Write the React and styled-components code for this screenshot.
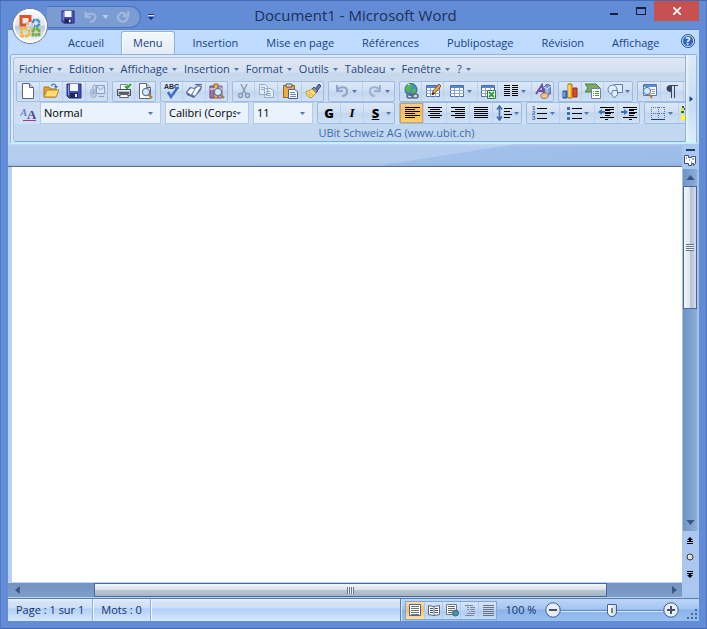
import React, { useState } from "react";
import styled, { createGlobalStyle, css } from "styled-components";

const GlobalStyle = createGlobalStyle`
  * {
    box-sizing: border-box;
  }
  body {
    margin: 0;
    font-family: "Open Sans", "Noto Sans", sans-serif;
    font-size: 11px;
    line-height: 16px;
  }
  button, select, input, textarea {
    font: inherit;
    color: inherit;
    margin: 0;
    padding: 0;
    border: 0;
    background: none;
  }
  button:focus-visible, select:focus-visible {
    outline: 1px dotted #15428b;
  }
`;

const Window = styled.div`
  position: relative;
  display: flex;
  flex-direction: column;
  min-height: 100vh;
  padding: 0 8px 8px;
  background: #638cd6;
  border-top: 1px solid #456cb3;
  box-shadow: inset 1px 0 #4f77c2, inset -1px 0 #4f77c2, inset 0 -1px #4068b0;
`;

const TitleBar = styled.header`
  display: grid;
  grid-template-columns: 152px 1fr 100px;
  height: 29px;
  border-bottom: 1px solid #5f83c0;
`;

const Title = styled.h1`
  margin: 0;
  padding-right: 48px;
  font-size: 15px;
  font-weight: 400;
  line-height: 28px;
  color: #1c2f57;
  text-align: center;
  white-space: nowrap;
`;

const OfficeButton = styled.button`
  position: absolute;
  left: 12px;
  top: 7px;
  z-index: 2;
  width: 36px;
  height: 36px;
  svg {
    display: block;
  }
`;

const QuickAccess = styled.div`
  display: flex;
  align-items: center;
  align-self: start;
  height: 22px;
  margin-top: 5px;
`;

const QuickPill = styled.div`
  display: flex;
  align-items: center;
  gap: 4px;
  width: 94px;
  height: 22px;
  margin-left: 39px;
  padding-left: 13px;
  border: 1px solid #4a73bd;
  border-left: 0;
  border-radius: 0 11px 11px 0;
  background: #7b9bd3;
`;

const QuickButton = styled.button`
  display: grid;
  place-items: center;
  width: ${(props) => props.$w}px;
  height: 18px;
  margin-left: ${(props) => props.$gap || 0}px;
`;

const WindowButtons = styled.div`
  display: flex;
  justify-content: flex-end;
`;

const WindowButton = styled.button`
  display: grid;
  place-items: center;
  flex: none;
  width: ${(props) => (props.$close ? 45 : 27)}px;
  height: 20px;
  background: ${(props) => (props.$close ? "#c75050" : "none")};
`;

const TabRow = styled.nav`
  display: flex;
  align-items: flex-end;
  height: 24px;
  padding: 0 4px 0 46px;
  background: #bfdbff;
  color: #15428b;
`;

const Tab = styled.button`
  height: 22px;
  padding: 0 14px;
  white-space: nowrap;
  ${(props) =>
    props.$active &&
    css`
      position: relative;
      z-index: 1;
      height: 23px;
      margin: 0 4px 0 3px;
      padding: 0 11px;
      border: 1px solid #8db2e3;
      border-bottom: 0;
      border-radius: 3px 3px 0 0;
      background: linear-gradient(#f4f8fd, #e2ebf7);
      box-shadow: inset 1px 1px #fff;
    `}
`;

const HelpButton = styled.button`
  width: 16px;
  height: 16px;
  margin: 0 -1px 5px auto;
  svg {
    display: block;
  }
`;

const RibbonShell = styled.section`
  padding: 0 2px;
  background: #bfdbff;
`;

const Ribbon = styled.div`
  display: flex;
  height: 90px;
  border: 1px solid #8db2e3;
  border-bottom: 2px solid #c9effb;
  border-radius: 3px;
  background: #dfe9f5;
`;

const RibbonGroup = styled.div`
  display: flex;
  flex: 1;
  flex-direction: column;
  min-width: 0;
  margin: 2px 0 0 2px;
  border: 1px solid #a9c3e0;
  border-bottom-color: #7ea9d8;
  border-right: 0;
  border-radius: 3px 0 0 3px;
  background: linear-gradient(#dfe8f4 0, #d4e0f0 14px, #c7d8ed 15px, #d3e3f5 100%);
  overflow: hidden;
`;

const MenuBar = styled.div`
  display: flex;
  gap: 7px;
  height: 23px;
  padding: 0 5px;
  color: #1f4583;
`;

const MenuButton = styled.button`
  display: flex;
  align-items: center;
  gap: 4px;
  white-space: nowrap;
`;

const ToolRow = styled.div`
  display: flex;
  gap: 4px;
  height: 22px;
  padding-left: 2px;
`;

const ToolGroup = styled.div`
  display: flex;
  flex: none;
  border: 1px solid #9ebce2;
  border-radius: 2px;
  background: linear-gradient(#dce8f7 0, #cfdff3 9px, #c2d6ef 10px, #d0e1f6 100%);
`;

const ToolButton = styled.button`
  display: flex;
  align-items: center;
  justify-content: center;
  gap: 2px;
  flex: none;
  width: ${(props) => props.$w}px;
  color: ${(props) => (props.$letter ? "#000" : "inherit")};
  & + & {
    border-left: 1px solid #bcd1ec;
  }
  ${(props) =>
    props.$active &&
    css`
      background: linear-gradient(#f8cf97, #fcb95c 45%, #fbd66f);
      box-shadow: inset 0 0 0 1px #c9a268;
    `}
`;

const StyleButton = styled.button`
  display: grid;
  place-items: center;
  flex: none;
  width: 24px;
  margin-right: -4px;
`;

const Combo = styled.label`
  display: grid;
  grid-template-columns: 1fr 12px;
  align-items: center;
  flex: none;
  width: ${(props) => props.$w}px;
  border: 1px solid #b3cbe9;
  background: #eaf2fb;
  select {
    grid-area: 1 / 1 / 2 / 2;
    width: 100%;
    min-width: 0;
    height: 18px;
    padding-left: 3px;
    appearance: none;
    color: #000;
    overflow: hidden;
  }
  svg {
    grid-area: 1 / 2 / 2 / 3;
  }
`;

const GroupLabel = styled.div`
  flex: 1;
  background: #c1d8f0;
  color: #3e6aaa;
  text-align: center;
  line-height: 17px;
  padding-left: 94px;
`;

const RibbonMore = styled.button`
  width: 11px;
  border-left: 1px solid #8fb3de;
  background: linear-gradient(90deg, #fff8, #fff0 4px), linear-gradient(#dce8f5, #c8dcf2 60%, #d9f0fb);
  color: #15428b;
  svg {
    display: block;
    margin: 0 auto 0 3px;
  }
`;

const Workspace = styled.main`
  display: grid;
  grid-template-columns: 1fr 17px;
  flex: 1;
  min-height: 0;
  background: #b7d0f1;
`;

const PageArea = styled.div`
  display: grid;
  grid-template-rows: 23px 1fr 16px;
  min-width: 0;
`;

const Band = styled.div`
  border-bottom: 1px solid #5e6d86;
  background: linear-gradient(#fff3, #fff0 3px, #0000 18px, #2b55911a), linear-gradient(171deg, #b4cdef 0, #b4cdef 62%, #a1c0ea 63%, #9bbce8 100%);
`;

const Page = styled.textarea`
  display: block;
  width: calc(100% - 4px);
  height: 100%;
  margin-left: 4px;
  padding: 24px 60px;
  background: #fff;
  color: #000;
  resize: none;
  outline: 0;
`;

const ScrollTrack = styled.div`
  display: flex;
  flex-direction: ${(props) => (props.$vertical ? "column" : "row")};
  min-width: 0;
  background: ${(props) =>
    props.$vertical
      ? "linear-gradient(90deg, #6f93c4, #8cadd8)"
      : "linear-gradient(#7394c2, #7d9ec9)"};
  ${(props) =>
    props.$vertical
      ? css`
          flex: 1;
          border-left: 1px solid #a7c2e8;
          border-right: 2px solid #a7c2e8;
        `
      : css`
          border-top: 1px solid #bdd5f7;
          border-bottom: 1px solid #bdd5f7;
        `}
`;

const ScrollArrow = styled.button`
  display: grid;
  place-items: center;
  flex: none;
  width: ${(props) => (props.$vertical ? 14 : 17)}px;
  height: ${(props) => (props.$vertical ? 17 : 14)}px;
  margin-top: ${(props) => (props.$end ? "auto" : 0)};
`;

const Thumb = styled.div`
  display: grid;
  place-items: center;
  border: 1px solid #4a6797;
  ${(props) =>
    props.$vertical
      ? css`
          flex: 0 0 123px;
          background: linear-gradient(90deg, #f4f6f9, #dfe5ec 50%, #b2c0d2 52%, #d3ddea);
        `
      : css`
          flex: 1;
          margin: 0 58px 0 69px;
          background: linear-gradient(#f2f5f8, #dce3ea 45%, #b7c4d3 55%, #a5b4c6);
        `}
`;

const Grip = styled.span`
  width: ${(props) => (props.$vertical ? 8 : 7)}px;
  height: 7px;
  background: repeating-linear-gradient(
    ${(props) => (props.$vertical ? "180deg" : "90deg")},
    #66758c 0 1px,
    #eef2f7 1px 2px
  );
`;

const Side = styled.div`
  display: flex;
  flex-direction: column;
`;

const RulerBox = styled.div`
  display: grid;
  grid-template-rows: 10px 1fr;
  justify-items: center;
  height: 25px;
  padding-right: 1px;
  background: #abc7ef;
`;

const SplitHandle = styled.span`
  width: 9px;
  height: 2px;
  margin-top: 5px;
  background: #1e3c6e;
`;

const BrowseButtons = styled.div`
  display: grid;
  grid-template-rows: repeat(3, 17px);
  place-items: center;
  height: 67px;
  padding-right: 2px;
  background: #abc7f0;
`;

const StatusBar = styled.footer`
  display: flex;
  height: 23px;
  border-top: 1px solid #567db0;
  background: linear-gradient(#f0f6ff 0, #d7e6f9 2px, #cadef7 9px, #b3d0f7 10px, #d5e7fc 100%);
  color: #15326b;
`;

const StatusItem = styled.button`
  padding: 0 8px 1px;
  border-right: 1px solid #8fb0dc;
  box-shadow: 1px 0 #f3f9ff;
  white-space: nowrap;
`;

const StatusRight = styled.div`
  display: flex;
  align-items: center;
  width: 299px;
  margin-left: auto;
  border-left: 1px solid #4f7fbd;
  box-shadow: inset 1px 0 #d7e8fc;
  background: linear-gradient(#bcd6f8, #a4c5f2 45%, #8bb3ea 50%, #9ac0f1);
`;

const Views = styled.div`
  display: flex;
  height: 19px;
  margin-left: 4px;
  border: 1px solid #83a6d5;
  background: linear-gradient(#d6e6fa, #bdd5f5 50%, #aecbf1 52%, #c8defa);
`;

const ViewButton = styled.button`
  display: grid;
  place-items: center;
  width: 18px;
  background: ${(props) =>
    props.$active ? "linear-gradient(#fbdba6, #f6c064 50%, #ffe29a)" : "none"};
  & + & {
    border-left: 1px solid #b1caec;
  }
`;

const ZoomLabel = styled.button`
  width: 48px;
  padding-bottom: 1px;
  white-space: nowrap;
`;

const ZoomButton = styled.button`
  display: grid;
  place-items: center;
  width: 16px;
  height: 16px;
`;

const ZoomRange = styled.input`
  appearance: none;
  width: 102px;
  height: 16px;
  background: linear-gradient(#5e8cc8, #5e8cc8) center / 100% 1px no-repeat,
    linear-gradient(#dcebff, #dcebff) center 9px / 100% 1px no-repeat;
  &::-webkit-slider-thumb {
    appearance: none;
    width: 10px;
    height: 13px;
    border: 1px solid #45618f;
    border-radius: 1px 1px 5px 5px;
    background: linear-gradient(#7385a0, #7385a0) center 3px / 2px 5px no-repeat,
      linear-gradient(90deg, #fff, #ccd8e8);
  }
`;

const ResizeGrip = styled.span`
  align-self: flex-end;
  margin: 0 1px 1px auto;
  svg {
    display: block;
  }
`;

function Caret({ color = "#5377ad", dir = "down", size = 5 }) {
  const points = {
    down: "0,0 10,0 5,6",
    up: "0,6 10,6 5,0",
    left: "7,0 7,10 1,5",
    right: "1,0 1,10 7,5",
  };
  const flat = dir === "down" || dir === "up";
  return (
    <svg
      width={flat ? size : Math.round(size * 0.7)}
      height={flat ? Math.round(size * 0.6) : size}
      viewBox={flat ? "0 0 10 6" : "0 0 7 10"}
      aria-hidden="true"
    >
      <polygon points={points[dir]} fill={color} />
    </svg>
  );
}

const lines = (rows, color = "#000") =>
  rows.map(([x, y, w]) => (
    <rect key={`${x}-${y}`} x={x} y={y} width={w} height="1" fill={color} />
  ));

const floppy = (
  <>
    <path d="M1 1h14v14H3l-2-2z" fill="#4550ae" stroke="#272f83" />
    <path d="M4 1h8v7H4z" fill="#f3f6ff" />
    <path d="M2 2h1v10H2z" fill="#8c97e4" />
    <path d="M4 10h8v5H4z" fill="#20265f" />
    <path d="M9 11h2v3H9z" fill="#e7edff" />
  </>
);

const doc = (
  <>
    <path d="M2.5.5h7l4 4v11h-11z" fill="#fff" stroke="#59657c" />
    <path d="M9.5.5v4h4" fill="#cbd7e9" stroke="#59657c" />
  </>
);

const lens = (
  <>
    <path d="M11 11l4 4" stroke="#bd7d2a" strokeWidth="2.4" />
    <circle cx="9" cy="9" r="3.6" fill="#d3ebfb" stroke="#60799d" strokeWidth="1.3" />
  </>
);

const table = (
  <>
    <path d="M1.5 2.5h13v11h-13z" fill="#fff" stroke="#4b6cae" />
    <path d="M2 3h12v2H2z" fill="#5a86d1" />
    <path d="M1 7.5h14M1 10.5h14M5.5 5v9M10.5 5v9" stroke="#8ca9d7" />
  </>
);

const icons = {
  save: floppy,
  new: doc,
  open: (
    <>
      <path d="M1 14V4h5l1 2h6v8z" fill="#e3a431" stroke="#a87418" />
      <path d="M1 14l3-7h12l-3 7z" fill="#ffdc72" stroke="#b88625" />
      <path d="M8 3c2-3 5-2 5 1" fill="none" stroke="#4878b4" strokeWidth="1.2" />
      <path d="M11 3h4l-2 3z" fill="#4878b4" />
    </>
  ),
  mail: (
    <g fill="#d9e4f4" stroke="#8d9fbd">
      <path d="M7.5 2.5h8v8h-8zM7.5 3l4 4 4-4" />
      <path d="M2 6v5.5c0 4 5 4 5 0V4c0-3-3-3-3 0v7c0 1 1 1 1 0V6" fill="none" />
      <path d="M10 13.5h5" />
    </g>
  ),
  print: (
    <>
      <path d="M4.5 1.5h7v6h-7z" fill="#fff" stroke="#7b8696" />
      <path d="M1.5 6.5h13v6h-13z" fill="#b8bcc4" stroke="#454b55" />
      <path d="M2 7h12v1H2z" fill="#eef" />
      <path d="M3 9h10v2H3z" fill="#555c67" />
      <path d="M4.5 11.5h7l1 3h-9z" fill="#fff" stroke="#59616f" />
      <path d="M9 3l2 2 4-4" fill="none" stroke="#36a535" strokeWidth="2" />
    </>
  ),
  preview: (
    <>
      {doc}
      {lens}
    </>
  ),
  spell: (
    <>
      <text x="0" y="6" fontSize="7" fontWeight="700" fontFamily="Liberation Sans, sans-serif" fill="#1c2740">
        ABC
      </text>
      <path d="M4 9l3 5 7-10" fill="none" stroke="#3c70c9" strokeWidth="2.5" />
    </>
  ),
  book: (
    <>
      <path d="M0 9l4-5 4 1 4-3 4 1-1 4-7 8-7-3z" fill="#52669b" />
      <path d="M1 9l4-4 4 1-4 6zM9 6l3-3 3 1-6 9-3-1z" fill="#fff" stroke="#7086b5" strokeWidth=".6" />
      <path d="M9 1.5h7" stroke="#4466aa" />
    </>
  ),
  research: (
    <>
      <path d="M1 3h4v12H1z" fill="#a274bc" stroke="#67437e" />
      <path d="M5 1h4v14H5z" fill="#eab84a" stroke="#986c1c" />
      <path d="M9 3h4v12H9z" fill="#c9a0d2" stroke="#7d5a92" />
      <path d="M1 6h12" stroke="#fff" />
      {lens}
    </>
  ),
  cut: (
    <g fill="none" stroke="#8798b3" strokeWidth="1.4">
      <path d="M5 1l5 10M11 1L6 11" />
      <circle cx="4.5" cy="12.5" r="2" />
      <circle cx="11.5" cy="12.5" r="2" />
    </g>
  ),
  copy: (
    <g fill="#e4ecf8" stroke="#98abc9">
      <path d="M1.5 1.5h6l2 2v8h-8zM6.5 5.5h6l3 2v7h-9z" />
      <path d="M3 4.5h4M3 6.5h3M8 8.5h4M8 10.5h5M8 12.5h5" />
    </g>
  ),
  paste: (
    <>
      <path d="M1.5 2.5h11v12h-11z" fill="#eeb03a" stroke="#93661c" />
      <path d="M4 1h6v3H4z" fill="#d9dce3" stroke="#555c6b" />
      <path d="M6.5 6.5h6l3 2v7h-9z" fill="#fff" stroke="#3e5fa4" />
      <path d="M8 9.5h5M8 11.5h6M8 13.5h6" stroke="#6686c4" />
    </>
  ),
  brush: (
    <>
      <path d="M10 6l4-5 2 2-4 5z" fill="#607bc4" stroke="#34446f" />
      <path d="M9 4l4 4-2 2-4-4z" fill="#8c8ea3" stroke="#4a4d60" />
      <path d="M7 6l4 4-5 5c-3-1-5-3-5-6z" fill="#f8df7b" stroke="#b8943a" />
      <path d="M4 9l4 3M3 11l3 2" stroke="#d5ac3c" />
    </>
  ),
  undo: (
    <path d="M3 2v6h6M3 8c2-5 10-5 10 0 0 3-2 5-5 5" fill="none" stroke="#8fa5c7" strokeWidth="2" />
  ),
  redo: (
    <path d="M13 2v6H7M13 8C11 3 3 3 3 8c0 3 2 5 5 5" fill="none" stroke="#9bb0d0" strokeWidth="2" />
  ),
  quickUndo: (
    <path d="M3 2v6h6M3 8c2-5 11-5 11 0 0 3-2 5-6 6" fill="none" stroke="#9fb6dd" strokeWidth="2.6" />
  ),
  repeat: (
    <path d="M14 1v6H8M12 6C7 0 0 6 3 11c3 4 9 3 10-2" fill="none" stroke="#a3b9de" strokeWidth="2.4" />
  ),
  globe: (
    <>
      <circle cx="8" cy="6.5" r="6" fill="#4690c4" stroke="#286086" />
      <path d="M4 2l4-1 2 2-3 2 1 3-3 1-3-3zM10 5l3 1-1 4-3 1z" fill="#5bb64a" />
      <path d="M5 2l2-1" stroke="#e5f9ff" />
      <g fill="none" stroke="#596a82" strokeWidth="1.5">
        <rect x="4" y="11" width="6" height="4" rx="2" />
        <rect x="9" y="11" width="6" height="4" rx="2" />
      </g>
    </>
  ),
  drawTable: (
    <>
      {table}
      <path d="M7 12l1-4 6-7 2 2-6 7z" fill="#e9ae48" stroke="#80551d" />
      <path d="M7 12l1-3 2 2z" fill="#322" />
    </>
  ),
  table,
  excel: (
    <>
      {table}
      <path d="M7.5 7.5h8v8h-8z" fill="#fff" stroke="#377e42" />
      <path d="M9 9l5 5M14 9l-5 5" stroke="#2f9845" strokeWidth="1.8" />
    </>
  ),
  columns: (
    <>{lines([2, 4, 6, 8, 10, 12].flatMap((y) => [[1, y, 6], [9, y, 6]]))}</>
  ),
  draw: (
    <>
      <path d="M9 4l3-3 4 2v7l-4 3-3-2z" fill="#8496d4" stroke="#4a5996" />
      <path d="M9 4l3 2 4-3M12 6v7" fill="none" stroke="#dbe3f8" />
      <path d="M1 11L7 2l2 9M4 8h5" fill="none" stroke="#6f4fa1" strokeWidth="2" />
      <path d="M6 12c0-2 6-3 7-1v3c-1 2-7 2-7 0z" fill="#efc08c" stroke="#a2764e" />
    </>
  ),
  chart: (
    <>
      <path d="M1 8h4v7H1z" fill="#497dd0" stroke="#224c92" />
      <path d="M6 1h4v14H6z" fill="#ffbe27" stroke="#aa7110" />
      <path d="M11 5h4v9h-4z" fill="#df4a28" stroke="#942d18" />
      <path d="M2 9v5" stroke="#9dc1f5" />
      <path d="M7 2v12" stroke="#fff09b" />
    </>
  ),
  diagram: (
    <>
      <path d="M0 1h11l4 4-4 4H0l3-4z" fill="#78aa66" stroke="#4b8148" />
      <path d="M6.5 5.5h9v10h-9z" fill="#fff" stroke="#71849b" />
      <path d="M8 8.5h1M10 8.5h4M8 10.5h1M10 10.5h4M8 12.5h1M10 12.5h4" stroke="#569b50" />
    </>
  ),
  shapes: (
    <g fill="#e3edfb" stroke="#547eb9">
      <path d="M7.5 1.5h8v8h-8z" />
      <circle cx="5.5" cy="6.5" r="4.5" />
      <path d="M5.5 7.5h5v4l-3 3.5-3-3.5z" />
    </g>
  ),
  zoomView: (
    <>
      <path d="M2.5 1.5h13v11h-13z" fill="#fff" stroke="#5876aa" />
      <path d="M3 2h12v2H3z" fill="#5b8ed6" />
      <path d="M10 6.5h4M11 8.5h3M10 10.5h4" stroke="#7e9cc8" />
      <path d="M8 11l3 4" stroke="#bb7b2e" strokeWidth="2" />
      <circle cx="6" cy="8" r="3.6" fill="#cce7fa" stroke="#557799" />
    </>
  ),
  pilcrow: (
    <path d="M14 2H7C1 2 1 9 7 9v6h1V3h2v12h1V3h3z" fill="#39455d" />
  ),
  left: lines([[1, 2, 15], [1, 4, 10], [1, 6, 15], [1, 8, 10], [1, 10, 15], [1, 12, 10]]),
  center: lines([[1, 2, 14], [3, 4, 10], [1, 6, 14], [3, 8, 10], [1, 10, 14], [3, 12, 10]]),
  right: lines([[1, 2, 14], [5, 4, 10], [1, 6, 14], [5, 8, 10], [1, 10, 14], [5, 12, 10]]),
  justify: lines([2, 4, 6, 8, 10, 12].map((y) => [1, y, 14])),
  spacing: (
    <>
      <path d="M3.5 2v12M1 4.5L3.5 1 6 4.5M1 11.5L3.5 15 6 11.5" fill="none" stroke="#416eac" strokeWidth="1.6" />
      {lines([[8, 3, 8], [8, 6, 6], [8, 9, 8], [8, 12, 6]])}
    </>
  ),
  numbers: (
    <>
      {[1, 2, 3].map((n) => (
        <text key={n} x="0" y={n * 5} fontSize="6" fontWeight="700" fontFamily="Liberation Sans, sans-serif" fill="#3d66a5">
          {n}
        </text>
      ))}
      {lines([[5, 3, 10], [5, 8, 10], [5, 13, 10]])}
    </>
  ),
  bullets: (
    <>
      <path d="M1 2h3v3H1zM1 7h3v3H1zM1 12h3v3H1z" fill="#416eac" />
      {lines([[6, 3, 10], [6, 8, 10], [6, 13, 10]])}
    </>
  ),
  outdent: (
    <>
      {lines([[2, 2, 14], [7, 4, 9], [7, 5, 5], [7, 7, 9], [7, 8, 6], [7, 10, 5], [2, 12, 14], [7, 14, 3]])}
      <path d="M0 7l4-3v2h3v2H4v2z" fill="#3b70b5" />
    </>
  ),
  indent: (
    <>
      {lines([[2, 2, 14], [8, 4, 8], [8, 5, 5], [8, 7, 8], [8, 8, 6], [8, 10, 5], [2, 12, 14], [8, 14, 3]])}
      <path d="M7 7L3 4v2H0v2h3v2z" fill="#3b70b5" />
    </>
  ),
  borders: (
    <>
      <path d="M1.5 2v11M8.5 2v11M14.5 2v11M1 2.5h14M1 8.5h14" stroke="#59729b" strokeDasharray="1 1" />
      <path d="M1 14.5h14" stroke="#263d67" />
    </>
  ),
  highlight: (
    <>
      <path d="M1 1h2v2H1zM3 3h2v2H3zM0 6h3v2H0z" fill="#4d611e" />
      <path d="M0 10h15v5H0z" fill="#ff0" />
      <path d="M0 3h3v3H0z" fill="#dce642" />
    </>
  ),
  styles: (
    <>
      <text x="0" y="11" fontSize="11" fontWeight="700" fontStyle="italic" fontFamily="Liberation Serif, serif" fill="#6685c8">
        A
      </text>
      <text x="7" y="14" fontSize="13" fontWeight="700" fontFamily="Liberation Serif, serif" fill="#51458e">
        A
      </text>
      <path d="M3 15.5h13" stroke="#9c3c8b" />
    </>
  ),
  pageView: (
    <>
      <path d="M2.5 2.5h11v11h-11z" fill="#fff" stroke="#53658a" />
      {lines([[4, 4, 8], [4, 6, 8], [4, 8, 8], [4, 10, 8], [4, 12, 8]], "#6c7281")}
    </>
  ),
  readView: (
    <>
      <path d="M2.5 3.5l5 1 1 0 5-1v9l-5 1h-1l-5-1z" fill="#fff" stroke="#53658a" />
      <path d="M8 4v10" stroke="#53658a" />
      {lines([[4, 6, 3], [4, 8, 3], [4, 10, 3], [9, 6, 3], [9, 8, 3], [9, 10, 3]], "#555")}
    </>
  ),
  webView: (
    <>
      <path d="M2.5 2.5h10v10h-10z" fill="#fff" stroke="#687990" />
      {lines([[4, 4, 7], [4, 6, 7], [4, 8, 5], [4, 10, 4]], "#666")}
      <circle cx="11.5" cy="11" r="3" fill="#42939c" stroke="#396b84" />
    </>
  ),
  outlineView: lines([[3, 3, 8], [5, 5, 2], [8, 5, 5], [5, 7, 2], [8, 7, 5], [7, 9, 1], [9, 9, 4], [5, 11, 8], [3, 13, 9]], "#7d8798"),
  draftView: lines([3, 5, 7, 9, 11, 13].map((y) => [3, y, 11]), "#6a7484"),
};

function Icon({ name, size = 16 }) {
  return (
    <svg width={size} height={size} viewBox="0 0 16 16" aria-hidden="true">
      {icons[name]}
    </svg>
  );
}

const Letter = styled.span`
  width: 16px;
  font-size: 13px;
  font-weight: 800;
  text-align: center;
  font-style: ${(props) => (props.$kind === "I" ? "italic" : "normal")};
  text-decoration: ${(props) => (props.$kind === "S" ? "underline" : "none")};
  font-family: ${(props) =>
    props.$kind === "I" ? '"Liberation Serif", serif' : '"Open Sans", sans-serif'};
`;

const tabs = [
  "Accueil",
  "Menu",
  "Insertion",
  "Mise en page",
  "Références",
  "Publipostage",
  "Révision",
  "Affichage",
];

const menus = [
  "Fichier",
  "Edition",
  "Affichage",
  "Insertion",
  "Format",
  "Outils",
  "Tableau",
  "Fenêtre",
  "?",
];

// icon, label, width, has a drop-down arrow
const standardTools = [
  [["new", "Nouveau", 22], ["open", "Ouvrir", 23], ["save", "Enregistrer", 23], ["mail", "Envoyer", 22]],
  [["print", "Imprimer", 21], ["preview", "Aperçu", 21]],
  [["spell", "Orthographe", 21], ["book", "Dictionnaire", 23], ["research", "Recherche", 22]],
  [["cut", "Couper", 21], ["copy", "Copier", 23], ["paste", "Coller", 24], ["brush", "Reproduire la mise en forme", 22]],
  [["undo", "Annuler", 33, true], ["redo", "Rétablir", 32, true]],
  [
    ["globe", "Lien hypertexte", 21],
    ["drawTable", "Dessiner un tableau", 22],
    ["table", "Tableau", 34, true],
    ["excel", "Feuille Excel", 20],
    ["columns", "Colonnes", 34, true],
    ["draw", "Dessin", 22],
  ],
  [["chart", "Graphique", 22], ["diagram", "Diagramme", 22], ["shapes", "Formes", 29, true]],
  [["zoomView", "Explorateur", 22], ["pilcrow", "Afficher tout", 23], ["columns", "Colonnes de texte", 23]],
];

const formatTools = [
  [["G", "Gras", 22], ["I", "Italique", 23], ["S", "Souligné", 31, true]],
  [
    ["left", "Aligner à gauche", 23],
    ["center", "Centrer", 23],
    ["right", "Aligner à droite", 23],
    ["justify", "Justifier", 23],
    ["spacing", "Interligne", 29, true],
  ],
  [
    ["numbers", "Numérotation", 32, true],
    ["bullets", "Puces", 35, true],
    ["outdent", "Diminuer le retrait", 23],
    ["indent", "Augmenter le retrait", 22],
  ],
  [["borders", "Bordures", 33, true], ["highlight", "Surlignage", 20]],
];

function Tools({ groups, active, onPick }) {
  return groups.map((group) => (
    <ToolGroup key={group[0][0]}>
      {group.map(([name, label, width, arrow]) => (
        <ToolButton
          key={label}
          title={label}
          aria-label={label}
          $w={width}
          $letter={name.length === 1}
          $active={active === name}
          onClick={() => onPick && onPick(name)}
        >
          {name.length === 1 ? <Letter $kind={name}>{name}</Letter> : <Icon name={name} />}
          {arrow && <Caret />}
        </ToolButton>
      ))}
    </ToolGroup>
  ));
}

function ComboBox({ label, value, width }) {
  return (
    <Combo $w={width}>
      <select aria-label={label} defaultValue={value}>
        <option>{value}</option>
      </select>
      <Caret />
    </Combo>
  );
}

function OfficeLogo() {
  return (
    <svg width="36" height="36" viewBox="0 0 36 36" aria-hidden="true">
      <defs>
        <linearGradient id="orb" x2="0" y2="1">
          <stop offset="0" stopColor="#fff" />
          <stop offset=".48" stopColor="#dde3ec" />
          <stop offset=".52" stopColor="#bcc8d8" />
          <stop offset="1" stopColor="#fff" />
        </linearGradient>
      </defs>
      <circle cx="18" cy="18" r="17.5" fill="url(#orb)" stroke="#6c7d9f" />
      <circle cx="18" cy="18" r="16" fill="none" stroke="#fff" strokeWidth="1.4" />
      <g fill="none">
        <path d="M14 17H9V8.500h9V14" stroke="#df5427" strokeWidth="3" />
        <path d="M21 15v-3h6v6h-5" stroke="#438acb" strokeWidth="2.4" strokeDasharray="2.4 .7" />
        <path d="M15 20.500h-5.500v7.500h7.500v-6" stroke="#f3b62f" strokeWidth="2.6" strokeDasharray="3.4 .7" />
        <path d="M21 21.500v5.500h6v-6h-6" stroke="#76ad42" strokeWidth="2.8" strokeDasharray="3 .6" />
      </g>
      <path d="M14 14h3v3h-3z" fill="#f9a67f" />
      <path d="M19 15h2v2h-2z" fill="#9cc6ee" />
      <path d="M15 19h2v2h-2z" fill="#fbd776" />
      <path d="M19 19h2v2h-2z" fill="#b7da92" />
    </svg>
  );
}

function App() {
  const [activeTab, setActiveTab] = useState("Menu");
  const [align, setAlign] = useState("left");
  const [view, setView] = useState("pageView");
  const [zoom, setZoom] = useState(50);

  const handleFormat = (name) => {
    if (["left", "center", "right", "justify"].includes(name)) {
      setAlign(name);
    }
  };

  return (
    <>
      <GlobalStyle />
      <Window>
        <OfficeButton aria-label="Bouton Office">
          <OfficeLogo />
        </OfficeButton>
        <TitleBar>
          <QuickAccess>
            <QuickPill>
              <QuickButton $w={16} aria-label="Enregistrer">
                <Icon name="save" size={14} />
              </QuickButton>
              <QuickButton $w={14} $gap={3} aria-label="Annuler">
                <Icon name="quickUndo" size={14} />
              </QuickButton>
              <QuickButton $w={8} aria-label="Liste des annulations">
                <Caret color="#bacbe8" size={7} />
              </QuickButton>
              <QuickButton $w={14} $gap={3} aria-label="Répéter">
                <Icon name="repeat" size={14} />
              </QuickButton>
            </QuickPill>
            <QuickButton $w={8} $gap={6} aria-label="Personnaliser">
              <svg width="6" height="6" viewBox="0 0 6 6">
                <path d="M0 0h6v1H0z" fill="#17366e" />
                <path d="M0 1h6v1H0z" fill="#dce8ff" />
                <path d="M0 3h6L3 6z" fill="#17366e" />
              </svg>
            </QuickButton>
          </QuickAccess>
          <Title>Document1 - Microsoft Word</Title>
          <WindowButtons>
            <WindowButton aria-label="Réduire">
              <svg width="10" height="10">
                <path d="M1 7h8v2H1z" fill="#141f36" />
              </svg>
            </WindowButton>
            <WindowButton aria-label="Agrandir">
              <svg width="10" height="8">
                <path d="M0 0h10v8H0zM1 2v5h8V2z" fill="#141f36" fillRule="evenodd" />
              </svg>
            </WindowButton>
            <WindowButton $close aria-label="Fermer">
              <svg width="8" height="8">
                <path d="M0 0l8 8M8 0L0 8" stroke="#fff" strokeWidth="1.7" />
              </svg>
            </WindowButton>
          </WindowButtons>
        </TitleBar>

        <TabRow>
          {tabs.map((tab) => (
            <Tab key={tab} $active={activeTab === tab} onClick={() => setActiveTab(tab)}>
              {tab}
            </Tab>
          ))}
          <HelpButton aria-label="Aide">
            <svg width="16" height="16" viewBox="0 0 16 16">
              <circle cx="8" cy="8" r="6.5" fill="#3168c4" stroke="#2c559e" />
              <circle cx="8" cy="8" r="5.6" fill="none" stroke="#c7ddfb" />
              <text x="8" y="12" textAnchor="middle" fontSize="10" fontWeight="700" fill="#fff">
                ?
              </text>
            </svg>
          </HelpButton>
        </TabRow>

        <RibbonShell>
          <Ribbon>
            <RibbonGroup>
              <MenuBar>
                {menus.map((menu) => (
                  <MenuButton key={menu}>
                    {menu}
                    <Caret />
                  </MenuButton>
                ))}
              </MenuBar>
              <ToolRow>
                <Tools groups={standardTools} />
              </ToolRow>
              <ToolRow>
                <StyleButton aria-label="Styles">
                  <Icon name="styles" />
                </StyleButton>
                <ComboBox label="Style" value="Normal" width={121} />
                <ComboBox label="Police" value="Calibri (Corps)" width={84} />
                <ComboBox label="Taille" value="11" width={60} />
                <Tools groups={formatTools} active={align} onPick={handleFormat} />
              </ToolRow>
              <GroupLabel>UBit Schweiz AG (www.ubit.ch)</GroupLabel>
            </RibbonGroup>
            <RibbonMore aria-label="Suite du ruban">
              <Caret dir="right" color="#15428b" size={6} />
            </RibbonMore>
          </Ribbon>
        </RibbonShell>

        <Workspace>
          <PageArea>
            <Band />
            <Page aria-label="Document" spellCheck="false" />
            <ScrollTrack>
              <ScrollArrow aria-label="Défiler à gauche">
                <Caret dir="left" color="#3b5680" size={8} />
              </ScrollArrow>
              <Thumb>
                <Grip />
              </Thumb>
              <ScrollArrow aria-label="Défiler à droite">
                <Caret dir="right" color="#3b5680" size={8} />
              </ScrollArrow>
            </ScrollTrack>
          </PageArea>
          <Side>
            <RulerBox>
              <SplitHandle />
              <svg width="12" height="13" viewBox="0 0 12 13" aria-hidden="true">
                <path d="M.5 1.500h4v2h3v-1h4v7l-2 2v-2h-2v2h-3v-2h-4z" fill="#fff" stroke="#3c5276" />
                <path d="M2 4h1M5 6h1M8 5h2M7 8h1" stroke="#3c5276" />
              </svg>
            </RulerBox>
            <ScrollTrack $vertical>
              <ScrollArrow $vertical aria-label="Défiler vers le haut">
                <Caret dir="up" color="#3b5680" size={9} />
              </ScrollArrow>
              <Thumb $vertical>
                <Grip $vertical />
              </Thumb>
              <ScrollArrow $vertical $end aria-label="Défiler vers le bas">
                <Caret dir="down" color="#3b5680" size={9} />
              </ScrollArrow>
            </ScrollTrack>
            <BrowseButtons>
              <button aria-label="Page précédente">
                <svg width="6" height="7" viewBox="0 0 6 7">
                  <path d="M3 0l3 3H4v1l2 0v1H0V4h2V3H0zM0 6h6v1H0z" />
                </svg>
              </button>
              <button aria-label="Sélectionner l'objet">
                <svg width="8" height="8" viewBox="0 0 8 8">
                  <circle cx="4" cy="4" r="3" fill="#ddd" stroke="#343434" />
                  <path d="M2 3l2-1" stroke="#fff" />
                </svg>
              </button>
              <button aria-label="Page suivante">
                <svg width="6" height="7" viewBox="0 0 6 7">
                  <path d="M3 7l3-3H4V3h2V2H0v1h2v1H0zM0 0h6v1H0z" />
                </svg>
              </button>
            </BrowseButtons>
          </Side>
        </Workspace>

        <StatusBar>
          <StatusItem>Page : 1 sur 1</StatusItem>
          <StatusItem>Mots : 0</StatusItem>
          <StatusRight>
            <Views>
              {["pageView", "readView", "webView", "outlineView", "draftView"].map((name) => (
                <ViewButton
                  key={name}
                  aria-label={name}
                  $active={view === name}
                  onClick={() => setView(name)}
                >
                  <Icon name={name} />
                </ViewButton>
              ))}
            </Views>
            <ZoomLabel>100 %</ZoomLabel>
            <ZoomButton aria-label="Zoom arrière" onClick={() => setZoom(zoom - 10)}>
              <svg width="16" height="16">
                <circle cx="8" cy="8" r="7.2" fill="#e4edf8" stroke="#435f8f" />
                <path d="M4 7h8v2H4z" fill="#46526a" />
              </svg>
            </ZoomButton>
            <ZoomRange
              type="range"
              aria-label="Zoom"
              value={zoom}
              onChange={(e) => setZoom(Number(e.target.value))}
            />
            <ZoomButton aria-label="Zoom avant" onClick={() => setZoom(zoom + 10)}>
              <svg width="16" height="16">
                <circle cx="8" cy="8" r="7.2" fill="#e4edf8" stroke="#435f8f" />
                <path d="M4 7h3V4h2v3h3v2H9v3H7V9H4z" fill="#46526a" />
              </svg>
            </ZoomButton>
            <ResizeGrip>
              <svg width="11" height="11" fill="#46699e">
                <path d="M8 0h2v2H8zM4 4h2v2H4zM8 4h2v2H8zM0 8h2v2H0zM4 8h2v2H4zM8 8h2v2H8z" />
              </svg>
            </ResizeGrip>
          </StatusRight>
        </StatusBar>
      </Window>
    </>
  );
}

export default App;
